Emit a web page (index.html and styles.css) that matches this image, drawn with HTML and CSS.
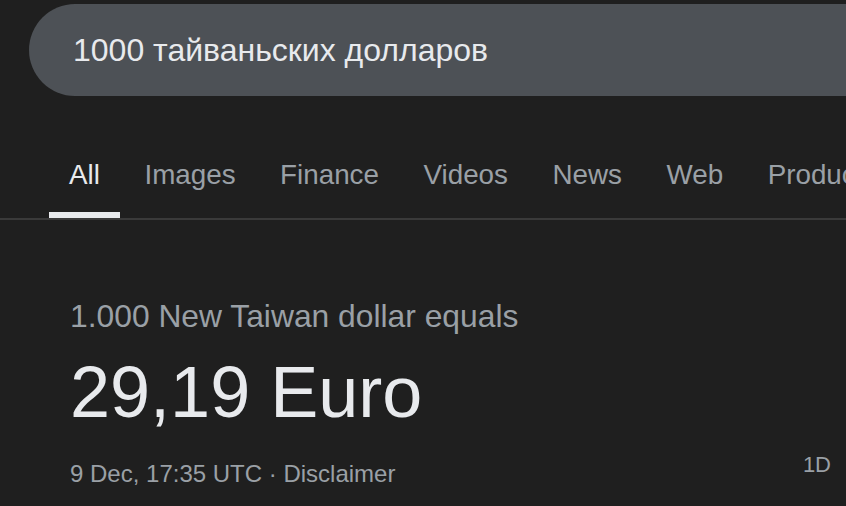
FILE: index.html
```html
<!DOCTYPE html>
<html lang="ru">
<head>
    <meta charset="UTF-8">
    <meta name="viewport" content="width=device-width, initial-scale=1.0">
    <title>1000 тайваньских долларов</title>
    <link rel="stylesheet" href="styles.css">
</head>
<body>
    <div class="search-bar">
        <span class="search-text">1000 тайваньских долларов</span>
    </div>

    <nav class="tabs">
        <a class="tab active" href="#">All</a>
        <a class="tab" href="#">Images</a>
        <a class="tab" href="#">Finance</a>
        <a class="tab" href="#">Videos</a>
        <a class="tab" href="#">News</a>
        <a class="tab" href="#">Web</a>
        <a class="tab" href="#">Products</a>
    </nav>

    <div class="converter">
        <div class="converter-from">1.000 New Taiwan dollar equals</div>
        <div class="converter-to">29,19 Euro</div>
        <div class="converter-meta">
            <span class="meta-date">9 Dec, 17:35 UTC · <a href="#">Disclaimer</a></span>
            <span class="range">1D</span>
        </div>
    </div>
</body>
</html>
```

FILE: styles.css
```css
body {
    font-family: "Liberation Sans", Arial, sans-serif;
    margin: 0;
    padding: 0;
    background-color: #1f1f1f;
    color: #e8eaed;
    overflow: hidden;
}

a {
    color: inherit;
    text-decoration: none;
}

.search-bar {
    margin: 4px 0 0 29px;
    width: 1000px;
    height: 92px;
    border-radius: 46px;
    background-color: #4d5156;
    display: flex;
    align-items: center;
    padding-left: 44px;
    box-sizing: border-box;
}

.search-text {
    font-size: 32px;
    color: #e8eaed;
    white-space: nowrap;
}

.tabs {
    display: flex;
    gap: 4.5px;
    margin-top: 63px;
    padding-left: 49px;
    border-bottom: 2px solid #3a3a3a;
    white-space: nowrap;
}

.tab {
    font-size: 27.8px;
    line-height: 32px;
    padding: 0 20px 21px;
    color: #9aa0a6;
    border-bottom: 6px solid transparent;
}

.tab.active {
    color: #e8eaed;
    border-bottom-color: #e8eaed;
}

.converter {
    padding: 0 15px 0 70px;
}

.converter-from {
    margin-top: 78px;
    font-size: 31.8px;
    line-height: 36px;
    color: #9aa0a6;
}

.converter-to {
    margin-top: 18px;
    font-size: 72px;
    line-height: 80px;
    color: #e8eaed;
}

.converter-meta {
    display: flex;
    justify-content: space-between;
    align-items: flex-start;
    margin-top: 20px;
}

.meta-date {
    margin-top: 8px;
    font-size: 24px;
    line-height: 28px;
    color: #9aa0a6;
}

.range {
    font-size: 22px;
    line-height: 26px;
    color: #9aa0a6;
}
```
